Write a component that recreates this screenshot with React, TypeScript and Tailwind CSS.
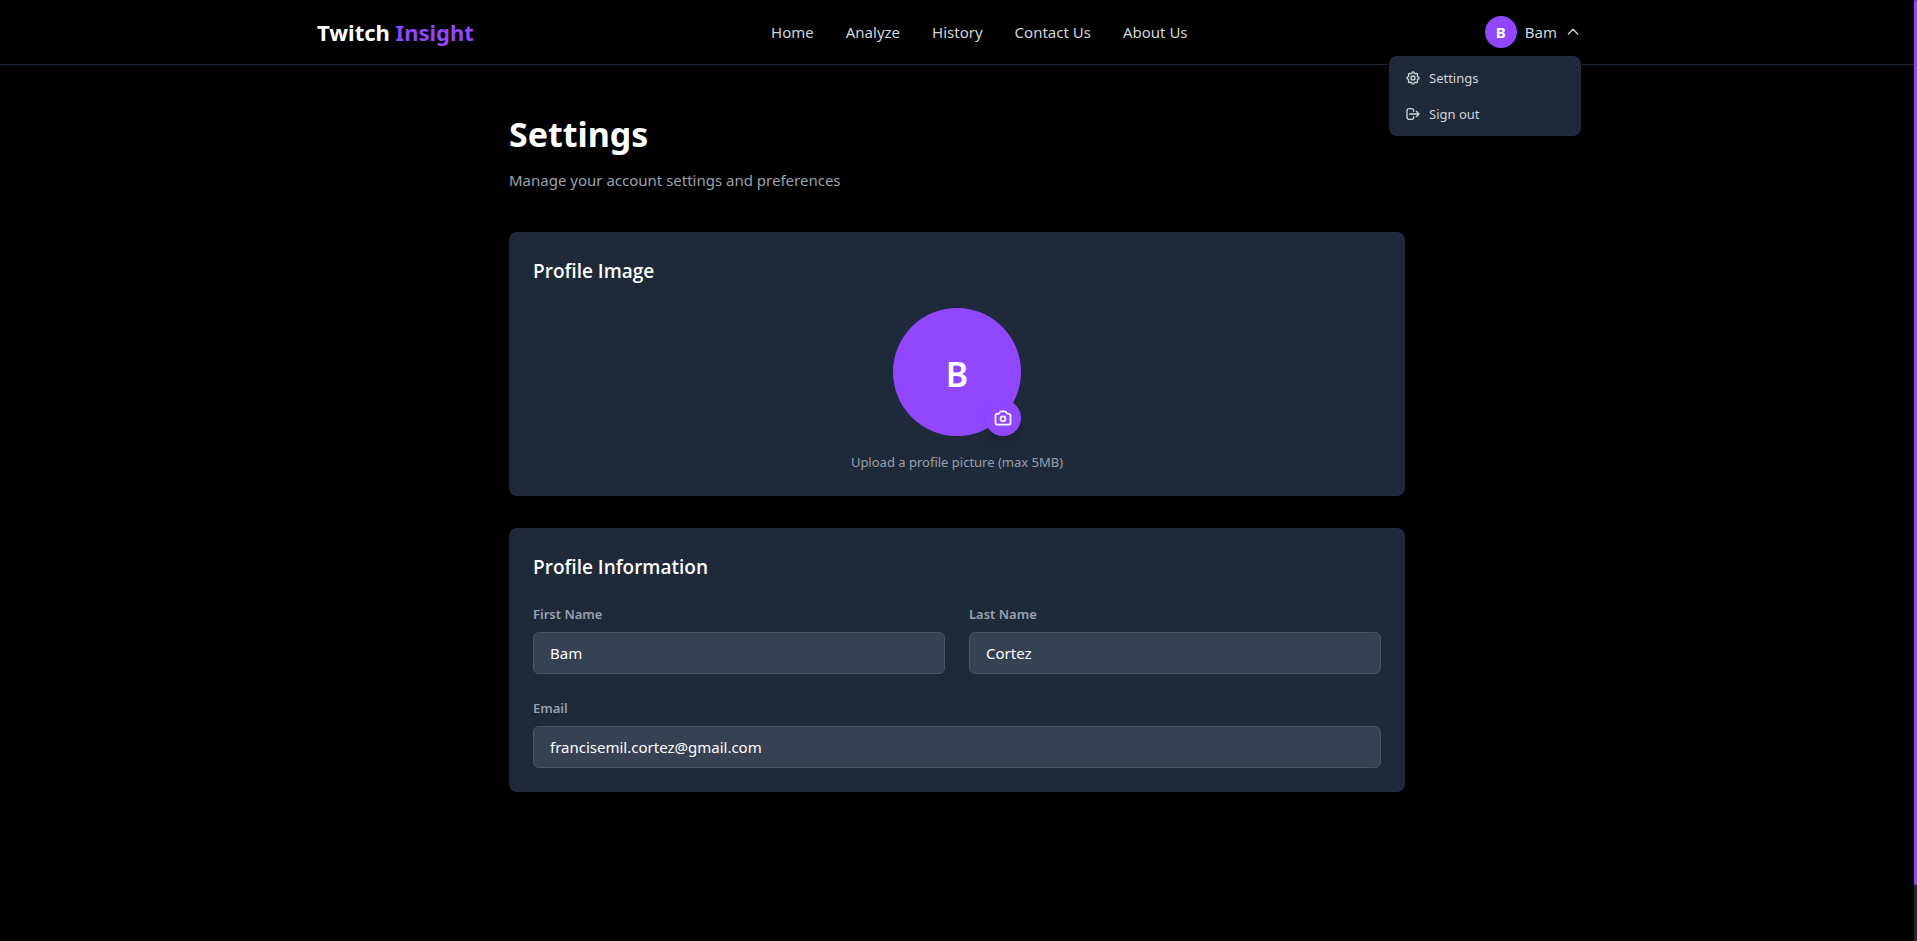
import { useState } from "react";
import type { ReactNode } from "react";
import { HiOutlineCamera, HiOutlineChevronUp, HiOutlineCog, HiOutlineLogout } from "react-icons/hi";

const NAV_LINKS = ["Home", "Analyze", "History", "Contact Us", "About Us"];

function UserMenu() {
  const [open, setOpen] = useState(true);
  return (
    <div className="relative">
      <button
        type="button"
        aria-expanded={open}
        onClick={() => setOpen(!open)}
        className="flex items-center gap-2 text-gray-300"
      >
        <span className="flex size-8 items-center justify-center rounded-full bg-[#9147ff] text-[15px] leading-6 font-bold text-white">B</span>
        <span>Bam</span>
        <HiOutlineChevronUp className="size-4" />
      </button>
      {open && (
        <div className="absolute top-full right-0 z-10 mt-2 w-48 rounded-lg bg-gray-800 py-1 text-[13px] leading-5 text-gray-300 shadow-lg ring-1 ring-black">
          <a href="#settings" className="flex items-center gap-2 px-4 py-2">
            <HiOutlineCog className="size-4" />
            Settings
          </a>
          <button type="button" className="flex w-full items-center gap-2 px-4 py-2">
            <HiOutlineLogout className="size-4" />
            Sign out
          </button>
        </div>
      )}
    </div>
  );
}

function Header() {
  return (
    <header className="border-b border-gray-800">
      <div className="mx-auto flex h-16 max-w-7xl items-center justify-between pr-4">
        <a href="#home" className="text-[22px] leading-8 font-bold text-white">
          Twitch <span className="text-[#9147ff]">Insight</span>
        </a>
        <nav className="flex gap-8 text-gray-300">
          {NAV_LINKS.map((label) => (
            <a key={label} href="#nav">{label}</a>
          ))}
        </nav>
        <UserMenu />
      </div>
    </header>
  );
}

function Card({ title, children }: { title: string; children: ReactNode }) {
  return (
    <section className="rounded-lg bg-gray-800 p-6">
      <h2 className="font-['Open_Sans',sans-serif] text-[19px] leading-[30px] font-semibold text-white">{title}</h2>
      {children}
    </section>
  );
}

function Field({ id, label, value, type = "text", className = "" }: { id: string; label: string; value: string; type?: string; className?: string }) {
  return (
    <div className={className}>
      <label htmlFor={id} className="mb-2 block text-[13px] leading-5 font-semibold text-gray-400">{label}</label>
      <input
        id={id}
        type={type}
        defaultValue={value}
        className="block w-full rounded-md border border-gray-600 bg-gray-700 px-4 py-2 text-[15px] leading-6 text-white outline-none"
      />
    </div>
  );
}

export default function App() {
  return (
    <div className="flex min-h-screen bg-black font-['Noto_Sans',sans-serif] text-[15px] leading-6">
      <div className="flex-1">
        <Header />
        <main className="mx-auto max-w-4xl py-12">
          <h1 className="text-[34px] leading-[43px] font-bold text-white">Settings</h1>
          <p className="mt-3 text-gray-400">Manage your account settings and preferences</p>
          <div className="mt-10 flex flex-col gap-8">
            <Card title="Profile Image">
              <div className="mt-[22px] flex flex-col items-center">
                <div className="relative flex size-32 items-center justify-center rounded-full bg-[#9147ff] pt-1 text-[34px] leading-10 font-semibold text-white">
                  B
                  <button type="button" aria-label="Upload picture" className="absolute right-0 bottom-0 rounded-full bg-[#9147ff] p-2 shadow-lg">
                    <HiOutlineCamera className="size-5" />
                  </button>
                </div>
                <p className="mt-4 text-[13px] leading-5 text-gray-400">Upload a profile picture (max 5MB)</p>
              </div>
            </Card>
            <Card title="Profile Information">
              <form className="mt-[22px] grid grid-cols-2 gap-6">
                <Field id="first-name" label="First Name" value="Bam" />
                <Field id="last-name" label="Last Name" value="Cortez" />
                <Field id="email" label="Email" type="email" value="francisemil.cortez@gmail.com" className="col-span-2" />
              </form>
            </Card>
          </div>
        </main>
      </div>
      <div className="w-[3px] shrink-0 bg-gray-800">
        <div className="h-[94vh] rounded-full bg-[#9147ff]" />
      </div>
    </div>
  );
}
